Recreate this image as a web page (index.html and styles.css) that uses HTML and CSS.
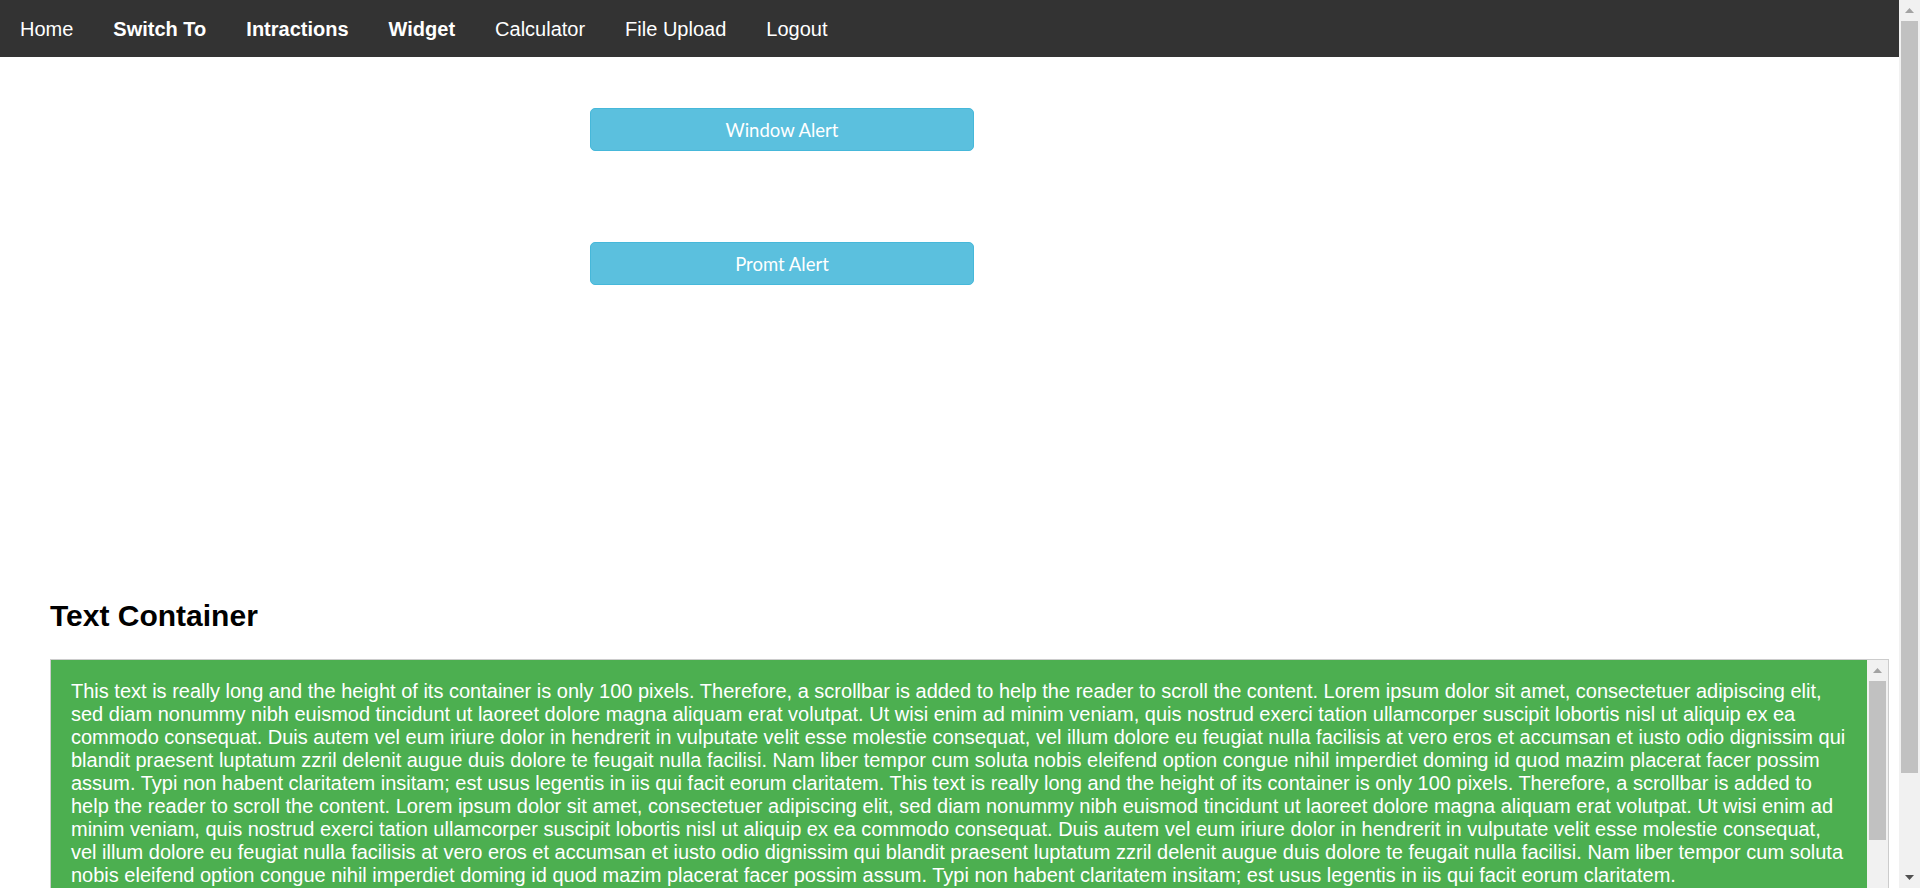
FILE: index.html
```html
<!DOCTYPE html>
<html lang="en">
<head>
<meta charset="utf-8">
<title>Alerts</title>
<link rel="stylesheet" href="styles.css">
</head>
<body>
<nav class="topnav">
  <a class="nav-link" href="#">Home</a>
  <a class="nav-link nav-bold" href="#">Switch To</a>
  <a class="nav-link nav-bold" href="#">Intractions</a>
  <a class="nav-link nav-bold" href="#">Widget</a>
  <a class="nav-link" href="#">Calculator</a>
  <a class="nav-link" href="#">File Upload</a>
  <a class="nav-link" href="#">Logout</a>
</nav>
<main class="content">
  <section class="alerts">
    <button class="btn-info" type="button">Window Alert</button>
    <button class="btn-info" type="button">Promt Alert</button>
  </section>
  <h2 class="section-title">Text Container</h2>
  <div class="scroll-box">
    <div class="scroll-text">This text is really long and the height of its container is only 100 pixels. Therefore, a scrollbar is added to help the reader to scroll the content. Lorem ipsum dolor sit amet, consectetuer adipiscing elit, sed diam nonummy nibh euismod tincidunt ut laoreet dolore magna aliquam erat volutpat. Ut wisi enim ad minim veniam, quis nostrud exerci tation ullamcorper suscipit lobortis nisl ut aliquip ex ea commodo consequat. Duis autem vel eum iriure dolor in hendrerit in vulputate velit esse molestie consequat, vel illum dolore eu feugiat nulla facilisis at vero eros et accumsan et iusto odio dignissim qui blandit praesent luptatum zzril delenit augue duis dolore te feugait nulla facilisi. Nam liber tempor cum soluta nobis eleifend option congue nihil imperdiet doming id quod mazim placerat facer possim assum. Typi non habent claritatem insitam; est usus legentis in iis qui facit eorum claritatem. This text is really long and the height of its container is only 100 pixels. Therefore, a scrollbar is added to help the reader to scroll the content. Lorem ipsum dolor sit amet, consectetuer adipiscing elit, sed diam nonummy nibh euismod tincidunt ut laoreet dolore magna aliquam erat volutpat. Ut wisi enim ad minim veniam, quis nostrud exerci tation ullamcorper suscipit lobortis nisl ut aliquip ex ea commodo consequat. Duis autem vel eum iriure dolor in hendrerit in vulputate velit esse molestie consequat, vel illum dolore eu feugiat nulla facilisis at vero eros et accumsan et iusto odio dignissim qui blandit praesent luptatum zzril delenit augue duis dolore te feugait nulla facilisi. Nam liber tempor cum soluta nobis eleifend option congue nihil imperdiet doming id quod mazim placerat facer possim assum. Typi non habent claritatem insitam; est usus legentis in iis qui facit eorum claritatem.</div>
    <div class="vscroll">
      <div class="sb-btn">
        <svg class="sb-arrow" width="9" height="5" viewBox="0 0 9 5"><polygon points="4.5,0 9,5 0,5" fill="#a3a3a3"/></svg>
      </div>
      <div class="sb-track">
        <div class="sb-thumb" style="height: 159px"></div>
      </div>
      <div class="sb-btn">
        <svg class="sb-arrow" width="9" height="5" viewBox="0 0 9 5"><polygon points="0,0 9,0 4.5,5" fill="#505050"/></svg>
      </div>
    </div>
  </div>
</main>
<div class="page-scroll">
  <div class="sb-btn">
    <svg class="sb-arrow" width="9" height="5" viewBox="0 0 9 5"><polygon points="4.5,0 9,5 0,5" fill="#a3a3a3"/></svg>
  </div>
  <div class="sb-track">
    <div class="sb-thumb" style="height: 752px"></div>
  </div>
  <div class="sb-btn">
    <svg class="sb-arrow" width="9" height="5" viewBox="0 0 9 5"><polygon points="0,0 9,0 4.5,5" fill="#505050"/></svg>
  </div>
</div>
</body>
</html>
```

FILE: styles.css
```css
html {
  background: #fff;
  scrollbar-width: none;
}

html::-webkit-scrollbar {
  display: none;
}

body {
  margin: 0 21px 0 0;
  font-family: "Liberation Sans", Arial, sans-serif;
  color: #000;
}

.topnav {
  display: flex;
  background: #333;
  height: 57px;
}

.nav-link {
  display: block;
  padding: 18px 20px 16px;
  color: #fff;
  text-decoration: none;
  font-size: 20px;
  line-height: 23px;
}

.nav-bold {
  font-weight: bold;
}

.content {
  margin: 0 10px 10px 50px;
}

.alerts {
  display: flex;
  flex-direction: column;
  align-items: flex-start;
  gap: 91px;
  padding-top: 51px;
  margin-left: 540px;
}

.btn-info {
  width: 384px;
  height: 43px;
  background: #5bc0de;
  border: 1px solid #46b8da;
  border-radius: 5px;
  color: #fff;
  font-family: Lato, "Open Sans", sans-serif;
  font-size: 18.5px;
  padding: 0;
  cursor: pointer;
}

.section-title {
  margin: 314px 0 25px 0;
  font-size: 30px;
  font-weight: bold;
  line-height: 34.5px;
}

.scroll-box {
  display: flex;
  height: 328px;
  background: #4caf50;
  border: 1px solid #ccc;
}

.scroll-text {
  flex: 1;
  min-width: 0;
  padding: 20px;
  overflow: hidden;
  color: #fff;
  font-size: 20px;
  line-height: 23px;
}

.vscroll,
.page-scroll {
  display: flex;
  flex-direction: column;
  width: 21px;
  flex: none;
  background: #f1f1f1;
}

.page-scroll {
  position: fixed;
  top: 0;
  right: 0;
  height: 100vh;
}

.sb-btn {
  display: flex;
  align-items: center;
  justify-content: center;
  height: 21px;
  flex: none;
}

.sb-arrow {
  display: block;
}

.sb-track {
  flex: 1;
  min-height: 0;
}

.sb-thumb {
  margin: 0 2px;
  background: #c1c1c1;
}
```
